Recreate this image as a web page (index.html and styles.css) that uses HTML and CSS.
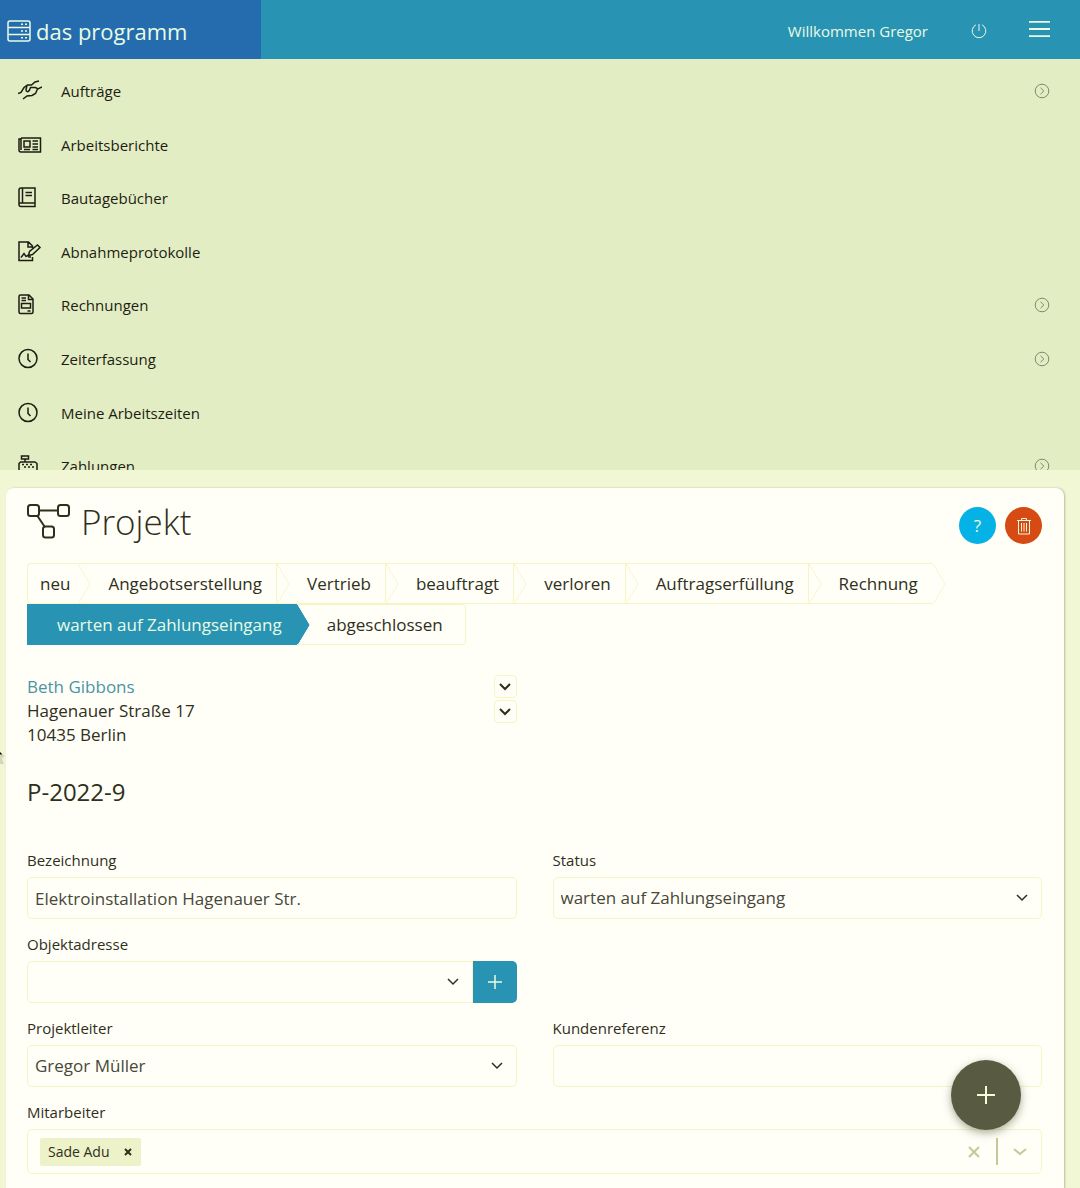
FILE: index.html
```html
<!DOCTYPE html>
<html lang="de">
<head>
    <meta charset="UTF-8">
    <meta name="viewport" content="width=device-width, initial-scale=1">
    <title>das programm - Projekt</title>
    <link rel="stylesheet" href="styles.css">
</head>
<body>
    <header class="topbar">
        <a class="brand" href="#">
            <svg class="brand-icon" viewBox="0 0 24 24" aria-hidden="true">
                <rect x="1" y="2" width="22" height="20" rx="2"/>
                <path d="M1 8.5h22M1 15.5h22M14 5.2h2M18 5.2h2M14 12h2M18 12h2M14 18.8h2M18 18.8h2"/>
            </svg>
            das programm
        </a>
        <div class="topbar-right">
            <span class="welcome">Willkommen Gregor</span>
            <button class="icon-btn power" type="button" aria-label="Abmelden">
                <svg viewBox="0 0 16 16"><path d="M8 1v7M5 1.8a6.8 6.8 0 1 0 6 0"/></svg>
            </button>
            <button class="icon-btn burger" type="button" aria-label="Menü">
                <svg viewBox="0 0 22 18"><path d="M0 1.5h22M0 9h22M0 16.5h22"/></svg>
            </button>
        </div>
    </header>

    <nav class="menu">
        <ul class="menu-list">
            <li><a href="#">
                <svg class="menu-icon" viewBox="0 0 24 24"><path d="M0 14.500l3-1 3-5 3.500-2.500h4l3.500-3 4-1M9 6.500l-1 4c0 2.500 2 3 3.500.5l1-2.500h5l2.500 1.500 4-2M19.500 10l-2 4.500-3.500 2-5 .5-4 3"/></svg>
                <span>Aufträge</span>
                <svg class="more" viewBox="0 0 16 16"><circle cx="8" cy="8" r="6.800"/><path d="M6.500 4.800L9.800 8l-3.300 3.200"/></svg>
            </a></li>
            <li><a href="#">
                <svg class="menu-icon" viewBox="0 0 24 24"><path d="M3 5h19.500v14H3a2 2 0 0 1-2-2V6h2M3 5v12M6 8h6v6H6zM14.500 8h5.500M14.500 11h5.500M14.500 14h5.500M6 16.500h6M14.500 16.500h5.500"/></svg>
                <span>Arbeitsberichte</span>
            </a></li>
            <li><a href="#">
                <svg class="menu-icon" viewBox="0 0 24 24"><path d="M3 2h14v18.500H3a2 2 0 0 1-2-2V4a2 2 0 0 1 2-2zM1.500 17h15.500M4.500 2v15M7.500 6.500h6.500M7.500 9.500h6.500"/></svg>
                <span>Bautagebücher</span>
            </a></li>
            <li><a href="#">
                <svg class="menu-icon" viewBox="0 0 24 24"><path d="M14.500 17v3.500H1V2h9.500l4 4v2M10 2v5h4M10.500 15.500l1-4 8-6.500 2.500 2.500-7.500 7zM3 17.500l3-4 2 3 1.500-1 1.500 1.500h2"/></svg>
                <span>Abnahmeprotokolle</span>
            </a></li>
            <li><a href="#">
                <svg class="menu-icon" viewBox="0 0 24 24"><path d="M2.500 2h8.500l4 4v13a1.500 1.500 0 0 1-1.500 1.500h-11A1.500 1.500 0 0 1 1 19V3.500A1.500 1.500 0 0 1 2.500 2zM10.500 2v4.500H15M3.500 5H8M3.500 7.500H8M3.500 10.500h9V15h-9zM9.500 18h3"/></svg>
                <span>Rechnungen</span>
                <svg class="more" viewBox="0 0 16 16"><circle cx="8" cy="8" r="6.800"/><path d="M6.500 4.800L9.800 8l-3.300 3.200"/></svg>
            </a></li>
            <li><a href="#">
                <svg class="menu-icon" viewBox="0 0 24 24"><circle cx="10" cy="11.500" r="9"/><path d="M10 6.500v6l2.500 2.500"/></svg>
                <span>Zeiterfassung</span>
                <svg class="more" viewBox="0 0 16 16"><circle cx="8" cy="8" r="6.800"/><path d="M6.500 4.800L9.800 8l-3.300 3.200"/></svg>
            </a></li>
            <li><a href="#">
                <svg class="menu-icon" viewBox="0 0 24 24"><circle cx="10" cy="11.500" r="9"/><path d="M10 6.500v6l2.500 2.500"/></svg>
                <span>Meine Arbeitszeiten</span>
            </a></li>
            <li><a href="#">
                <svg class="menu-icon" viewBox="0 0 24 24"><path d="M3.500 2h7v3h-7zM7 5v3M1 17V9.500L2.500 8H17l2 1.500V17v4H1zM4 10.500h2M8 10.500h2M12 10.500h2M6 13h2M10 13h2M14 13h2"/></svg>
                <span>Zahlungen</span>
                <svg class="more" viewBox="0 0 16 16"><circle cx="8" cy="8" r="6.800"/><path d="M6.500 4.800L9.800 8l-3.300 3.200"/></svg>
            </a></li>
        </ul>
    </nav>

    <main class="card">
        <div class="card-head">
            <h1>
                <svg class="title-icon" viewBox="0 0 44 36" aria-hidden="true">
                    <rect x="1" y="1" width="11" height="11" rx="2.500"/>
                    <rect x="31" y="1" width="11" height="11" rx="2.500"/>
                    <rect x="16" y="22.500" width="11" height="11" rx="2.500"/>
                    <path d="M12 6.500h19M10.500 12l7 10.500"/>
                </svg>
                Projekt
            </h1>
            <div class="head-actions">
                <button class="round help" type="button" aria-label="Hilfe">?</button>
                <button class="round delete" type="button" aria-label="Löschen">
                    <svg viewBox="0 0 16 18"><path d="M1 3.500h14M5.500 3.500V1.500h5v2M2.500 3.500v13.500h11V3.500M5.500 6v8.500M8 6v8.500M10.500 6v8.500"/></svg>
                </button>
            </div>
        </div>

        <ol class="steps">
            <li>neu</li>
            <li>Angebotserstellung</li>
            <li>Vertrieb</li>
            <li>beauftragt</li>
            <li>verloren</li>
            <li>Auftragserfüllung</li>
            <li>Rechnung</li>
            <li class="active" aria-current="step">warten auf Zahlungseingang</li>
            <li>abgeschlossen</li>
        </ol>

        <section class="customer">
            <address>
                <a href="#">Beth Gibbons</a><br>
                Hagenauer Straße 17<br>
                10435 Berlin
            </address>
            <div class="customer-actions">
                <button type="button" aria-label="Kunde wählen"><svg viewBox="0 0 12 8"><path d="M1 1l5 5 5-5"/></svg></button>
                <button type="button" aria-label="Adresse wählen"><svg viewBox="0 0 12 8"><path d="M1 1l5 5 5-5"/></svg></button>
            </div>
        </section>

        <h2>P-2022-9</h2>

        <form class="fields">
            <div class="field">
                <label for="bezeichnung">Bezeichnung</label>
                <input class="control" type="text" id="bezeichnung" value="Elektroinstallation Hagenauer Str.">
            </div>
            <div class="field">
                <label for="status">Status</label>
                <div class="select">
                    <select class="control" id="status"><option>warten auf Zahlungseingang</option></select>
                    <svg viewBox="0 0 12 8"><path d="M1 1l5 5 5-5"/></svg>
                </div>
            </div>
            <div class="field field-left">
                <label for="objektadresse">Objektadresse</label>
                <div class="input-group">
                    <div class="select">
                        <select class="control" id="objektadresse"><option></option></select>
                        <svg viewBox="0 0 12 8"><path d="M1 1l5 5 5-5"/></svg>
                    </div>
                    <button class="add" type="button" aria-label="Objektadresse hinzufügen">
                        <svg viewBox="0 0 14 14"><path d="M7 0v14M0 7h14"/></svg>
                    </button>
                </div>
            </div>
            <div class="field field-left">
                <label for="projektleiter">Projektleiter</label>
                <div class="select">
                    <select class="control" id="projektleiter"><option>Gregor Müller</option></select>
                    <svg viewBox="0 0 12 8"><path d="M1 1l5 5 5-5"/></svg>
                </div>
            </div>
            <div class="field">
                <label for="kundenreferenz">Kundenreferenz</label>
                <input class="control" type="text" id="kundenreferenz">
            </div>
            <div class="field field-wide">
                <label for="mitarbeiter">Mitarbeiter</label>
                <div class="control multi">
                    <span class="tag">Sade Adu
                        <button type="button" aria-label="Sade Adu entfernen"><svg viewBox="0 0 8 8"><path d="M1 1l6 6M7 1L1 7"/></svg></button>
                    </span>
                    <input type="text" id="mitarbeiter">
                    <button class="clear" type="button" aria-label="Alle entfernen"><svg viewBox="0 0 12 12"><path d="M1 1l10 10M11 1L1 11"/></svg></button>
                    <button class="open" type="button" aria-label="Auswahl öffnen"><svg viewBox="0 0 14 8"><path d="M1 1l6 5 6-5"/></svg></button>
                </div>
            </div>
        </form>
    </main>

    <button class="fab" type="button" aria-label="Neu">
        <svg viewBox="0 0 18 18"><path d="M9 0v18M0 9h18"/></svg>
    </button>
    <svg class="pointer" viewBox="0 0 6 14" aria-hidden="true"><path class="tip" d="M0 0l2.500 2.500H0z"/><path class="shade" d="M0 3h5L2 7l2 5H0z"/></svg>
</body>
</html>
```

FILE: styles.css
```css
* {
    box-sizing: border-box;
}

body {
    margin: 0;
    min-height: 100vh;
    display: flex;
    flex-direction: column;
    background-color: #f1f6d4;
    color: #2f2f1c;
    font-family: "Open Sans", sans-serif;
    font-size: 17px;
    line-height: 24px;
}

a {
    color: inherit;
    text-decoration: none;
}

button {
    padding: 0;
    border: 0;
    background: none;
    color: inherit;
    font: inherit;
    cursor: pointer;
}

svg {
    display: block;
    fill: none;
    stroke: currentColor;
    stroke-width: 1.5;
    flex-shrink: 0;
}

/* Header */
.topbar {
    display: flex;
    justify-content: space-between;
    height: 59px;
    background-color: #2993b3;
    color: #e9fbe4;
}

.brand {
    display: flex;
    align-items: center;
    gap: 5px;
    width: 261px;
    padding: 3px 7px 0;
    background-color: #246cae;
    font-size: 22px;
}

.brand-icon {
    width: 24px;
    height: 24px;
}

.topbar-right {
    display: flex;
    align-items: center;
    padding: 3px 30px 0 0;
    font-size: 15px;
}

.power {
    margin: 0 42px 0 43px;
}

.power svg {
    width: 16px;
    height: 16px;
    stroke-width: 1;
}

.burger {
    padding-bottom: 4px;
}

.burger svg {
    width: 21px;
    height: 18px;
    stroke-width: 2;
}

/* Menu */
.menu {
    height: 411px;
    padding-top: 5px;
    overflow: hidden;
    background-color: #e3edc3;
    color: #1d1d14;
    font-size: 15px;
}

.menu-list {
    display: grid;
    grid-auto-rows: 13%;
    height: 412px;
    margin: 0;
    padding: 0;
    list-style: none;
}

.menu-list a {
    display: flex;
    align-items: center;
    height: 100%;
    padding: 1px 30px 0 18px;
}

.menu-icon {
    width: 24px;
    height: 24px;
    margin-right: 19px;
}

.more {
    width: 16px;
    height: 16px;
    margin-left: auto;
    color: #85856c;
    stroke-width: 1;
}

/* Card */
.card {
    flex: 1;
    margin: 18px 16px 0 6px;
    padding: 12px 22px 15px 21px;
    border-radius: 8px 8px 0 0;
    background-color: #fffff8;
    box-shadow: 1px 0 2px #b9bd97;
}

.card-head {
    display: flex;
    justify-content: space-between;
    margin-bottom: 19px;
}

h1 {
    display: flex;
    align-items: center;
    gap: 10px;
    margin: 0;
    font-size: 35px;
    font-weight: 300;
    line-height: 42px;
}

.title-icon {
    width: 44px;
    height: 36px;
    stroke-width: 2;
}

.head-actions {
    display: flex;
    gap: 9px;
    padding-top: 7px;
}

.round {
    display: grid;
    place-items: center;
    width: 37px;
    height: 37px;
    border-radius: 50%;
    color: #f4f8d8;
}

.help {
    background-color: #04b2e6;
}

.delete {
    background-color: #d64a14;
}

.delete svg {
    width: 16px;
    height: 18px;
    stroke-width: 1;
}

/* Status chain */
.steps {
    display: flex;
    flex-wrap: wrap;
    margin: 0 80px 30px 0;
    padding: 0;
    list-style: none;
    line-height: 39px;
}

.steps li {
    position: relative;
    padding: 0 14px 0 30px;
    border: 1px solid #f5f5c4;
    border-left: 0;
}

.steps li:first-child {
    padding: 0 7px 0 12px;
    border-left: 1px solid #f5f5c4;
    border-radius: 4px 0 0 4px;
}

.steps li:first-child,
.steps li:nth-child(7) {
    border-right-color: transparent;
}

.steps li:last-child {
    padding-right: 22px;
    border-radius: 0 4px 4px 0;
}

.steps li::after {
    content: "";
    position: absolute;
    top: 5px;
    left: calc(100% - 14px);
    width: 29px;
    height: 29px;
    border: solid #f0f0b4;
    border-width: 1px 1px 0 0;
    transform: scaleX(.6) rotate(45deg);
    clip-path: polygon(0 0, 100% 0, 100% 100%);
}

.steps li:last-child::after {
    display: none;
}

.steps .active {
    border-color: #2993b3;
    background-color: #2993b3;
    color: #e9fbe4;
}

.steps .active::after {
    border-color: #2993b3;
    background-color: #2993b3;
}

/* Customer */
.customer {
    display: flex;
    justify-content: space-between;
    width: calc(50% - 18px);
    margin-bottom: 30px;
}

address {
    font-style: normal;
}

address a {
    color: #4b94a6;
}

.customer-actions {
    display: grid;
    gap: 2px;
    align-content: start;
}

.customer-actions button {
    display: grid;
    place-items: center;
    width: 23px;
    height: 23px;
    border: 1px solid #f5f5c4;
    border-radius: 4px;
}

.customer-actions svg {
    width: 12px;
    height: 8px;
    stroke-width: 2;
}

h2 {
    margin: 0 0 41px;
    font-size: 24px;
    font-weight: 400;
    line-height: 30px;
}

/* Form */
.fields {
    display: grid;
    grid-template-columns: 1fr 1fr;
    gap: 13px 36px;
}

.field-left {
    grid-column: 1;
}

.field-wide {
    grid-column: 1 / -1;
}

.field label {
    display: block;
    margin-bottom: 5px;
    font-size: 15px;
}

.control {
    width: 100%;
    height: 42px;
    padding: 0 7px;
    border: 1px solid #f5f5c4;
    border-radius: 5px;
    background: none;
    color: #48483a;
    font: inherit;
    appearance: none;
}

.select {
    flex: 1;
    display: grid;
    align-items: center;
}

.select > * {
    grid-area: 1 / 1;
}

.select svg {
    justify-self: end;
    width: 12px;
    height: 8px;
    margin-right: 14px;
    pointer-events: none;
}

.input-group {
    display: flex;
}

.input-group .control {
    border-radius: 5px 0 0 5px;
}

.add {
    display: grid;
    place-items: center;
    width: 44px;
    border-radius: 0 5px 5px 0;
    background-color: #2993b3;
    color: #e9fbe4;
}

.add svg {
    width: 14px;
    height: 14px;
}

.multi {
    display: flex;
    align-items: center;
    height: 45px;
    padding: 0 14px 0 12px;
}

.multi input {
    flex: 1;
    min-width: 0;
    border: 0;
    background: none;
    font: inherit;
}

.tag {
    display: flex;
    align-items: center;
    gap: 14px;
    height: 28px;
    padding: 0 9px 0 8px;
    border-radius: 2px;
    background-color: #edf2c8;
    color: #2f2f1c;
    font-size: 14px;
}

.tag svg {
    width: 8px;
    height: 8px;
    stroke-width: 2;
}

.clear,
.open {
    color: #c7c79a;
}

.clear {
    padding-right: 16px;
}

.clear svg {
    width: 12px;
    height: 12px;
    stroke-width: 2;
}

.open {
    height: 27px;
    padding-left: 15px;
    border-left: 2px solid #c7c79a;
}

.open svg {
    width: 14px;
    height: 8px;
    stroke-width: 2;
}

/* Floating button */
.fab {
    position: fixed;
    right: 59px;
    bottom: 58px;
    display: grid;
    place-items: center;
    width: 70px;
    height: 70px;
    border-radius: 50%;
    background-color: #595a42;
    box-shadow: 0 3px 8px rgba(90, 90, 50, 0.5);
    color: #f7f9d8;
}

.fab svg {
    width: 18px;
    height: 18px;
    stroke-width: 2;
}

.pointer {
    position: fixed;
    left: 0;
    top: 752px;
    width: 6px;
    height: 14px;
    stroke: none;
}

.tip {
    fill: #000;
}

.shade {
    fill: #d3d7bb;
}
```
